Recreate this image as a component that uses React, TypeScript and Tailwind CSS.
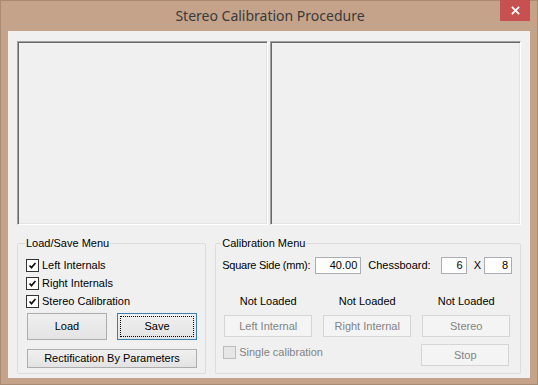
import React from 'react';

const CheckMark = () => (
  <svg viewBox="0 0 13 13" className="w-[13px] h-[13px]">
    <path d="M3 6.5 L5.3 9 L10 3.6" fill="none" stroke="#111" strokeWidth="2" />
  </svg>
);

const CheckBox = ({ checked, disabled, label }: { checked?: boolean; disabled?: boolean; label: string }) => (
  <div className="flex items-center h-[18px]">
    <div
      className={
        disabled
          ? 'w-[13px] h-[13px] border border-[#bcbcbc] bg-[#e6e6e6]'
          : 'w-[13px] h-[13px] border border-[#333] bg-white flex items-center justify-center'
      }
    >
      {checked && <CheckMark />}
    </div>
    <span className={disabled ? 'ml-[3px] text-[#838383]' : 'ml-[3px] text-black'}>{label}</span>
  </div>
);

const Button = ({ label, className = '' }: { label: string; className?: string }) => (
  <div
    className={`flex items-center justify-center border border-[#adadad] bg-gradient-to-b from-[#f0f0f0] to-[#e3e3e3] text-black ${className}`}
  >
    {label}
  </div>
);

const DisabledButton = ({ label, className = '' }: { label: string; className?: string }) => (
  <div className={`flex items-center justify-center border border-[#d5d5d5] bg-[#f4f4f4] text-[#838383] ${className}`}>
    {label}
  </div>
);

const Field = ({ value, className = '' }: { value: string; className?: string }) => (
  <div className={`h-[17px] border border-[#abadb3] bg-white flex items-center justify-end pr-[3px] ${className}`}>
    {value}
  </div>
);

const Panel = () => (
  <div className="flex-1 border border-t-[#a0a0a0] border-l-[#a0a0a0] border-r-white border-b-white shadow-[inset_1px_1px_0_#696969,inset_-1px_-1px_0_#e3e3e3] bg-[#f0f0f0]" />
);

export default function App() {
  return (
    <div
      className="w-[538px] h-[385px] bg-[#c4a38a] border border-[#a98b74] flex flex-col text-[11px] leading-[13px]"
      style={{ fontFamily: '"Liberation Sans", Arial, sans-serif' }}
    >
      {/* Title bar */}
      <div className="h-[30px] flex items-start relative">
        <div
          className="flex-1 text-center text-[14px] leading-[30px] text-[#3a3a3a] pl-[2px]"
          style={{ fontFamily: '"Noto Sans", "Open Sans", sans-serif' }}
        >
          Stereo Calibration Procedure
        </div>
        <div className="absolute right-[7px] top-[-1px] w-[30px] h-[21px] bg-[#c75050] flex items-center justify-center">
          <svg viewBox="0 0 10 10" className="w-[9px] h-[9px]">
            <path d="M1 1 L9 9 M9 1 L1 9" stroke="white" strokeWidth="2" />
          </svg>
        </div>
      </div>

      {/* Client area */}
      <div className="mx-[7px] h-[347px] bg-[#f0f0f0] px-[9px] pt-[10px]">
        <div className="flex gap-[2px] h-[184px]">
          <Panel />
          <Panel />
        </div>

        <div className="flex gap-[9px] mt-[12px]">
          {/* Load/Save Menu */}
          <fieldset className="w-[190px] border border-[#dcdcdc] rounded-[2px] px-[8px] pt-[6px] pb-[5px]">
            <legend className="px-[1px] -ml-[1px] text-black">Load/Save Menu</legend>
            <CheckBox checked label="Left Internals" />
            <CheckBox checked label="Right Internals" />
            <CheckBox checked label="Stereo Calibration" />
            <div className="flex gap-[10px] mt-[3px] ml-[1px]">
              <Button label="Load" className="w-[80px] h-[27px]" />
              <div className="w-[80px] h-[27px] border border-[#3c7fb1] bg-gradient-to-b from-[#f0f0f0] to-[#e3e3e3] p-[2px]">
                <div className="w-full h-full border border-dotted border-black flex items-center justify-center text-black">
                  Save
                </div>
              </div>
            </div>
            <Button label="Rectification By Parameters" className="w-[170px] h-[19px] mt-[9px] ml-[1px]" />
          </fieldset>

          {/* Calibration Menu */}
          <fieldset className="flex-1 border border-[#dcdcdc] rounded-[2px] pl-[6px] pr-[8px] pt-[7px] pb-[6px]">
            <legend className="px-[1px] -ml-[1px] text-black">Calibration Menu</legend>
            <div className="flex items-center h-[17px] whitespace-nowrap">
              <span className="tracking-[-0.25px]">Square Side (mm):</span>
              <Field value="40.00" className="w-[46px] ml-[5px]" />
              <span className="ml-[7px]">Chessboard:</span>
              <Field value="6" className="w-[26px] ml-[10px]" />
              <span className="ml-[7px]">X</span>
              <Field value="8" className="w-[28px] ml-[3px]" />
            </div>
            <div className="flex gap-[11px] mt-[21px] ml-[2px]">
              {['Left Internal', 'Right Internal', 'Stereo'].map((b) => (
                <div key={b} className="w-[88px] flex flex-col items-center">
                  <span className="text-black">Not Loaded</span>
                  <DisabledButton label={b} className="w-[88px] h-[22px] mt-[7px]" />
                </div>
              ))}
            </div>
            <div className="flex items-start gap-[11px] mt-[7px] ml-[2px]">
              <div className="w-[187px] mt-[-1px] -ml-[1px]">
                <CheckBox disabled label="Single calibration" />
              </div>
              <DisabledButton label="Stop" className="w-[88px] h-[22px]" />
            </div>
          </fieldset>
        </div>
      </div>
    </div>
  );
}
